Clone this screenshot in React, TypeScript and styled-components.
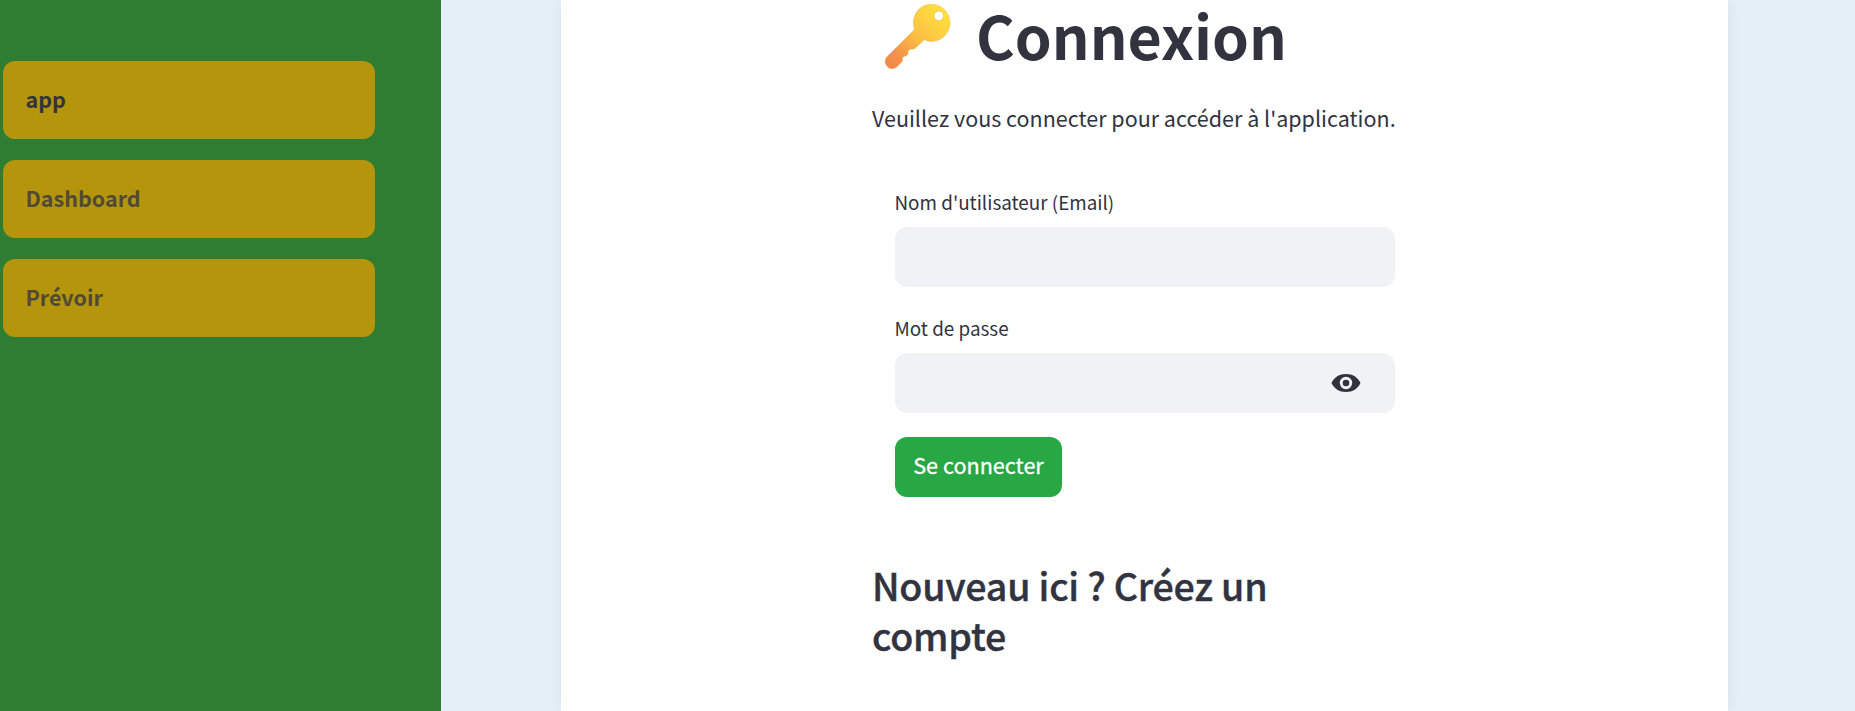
import React from 'react';
import styled, { createGlobalStyle } from 'styled-components';

const GlobalStyle = createGlobalStyle`
  * { box-sizing: border-box; }
  html, body { margin: 0; padding: 0; overflow: hidden; }
  body {
    font-family: "Source Sans Pro", "Noto Sans CJK SC", sans-serif;
    color: #31333f;
    background: #e4eff8;
  }
`;

const Page = styled.div`
  display: grid;
  grid-template-columns: 441px 1fr;
  height: 711px;
  overflow: hidden;
`;

const Sidebar = styled.nav`
  display: flex;
  flex-direction: column;
  gap: 21px;
  padding: 61px 66px 0 3px;
  background: #2e7d32;
`;

const NavLink = styled.a<{ $active?: boolean }>`
  display: flex;
  align-items: center;
  height: 78px;
  padding: 0 22.5px 2px;
  border-radius: 12px;
  background: #b5950b;
  color: ${(p) => (p.$active ? '#31333f' : '#504a35')};
  font-size: 21.5px;
  font-weight: 700;
  line-height: 36px;
`;

const Main = styled.main`
  padding: 0 127px 0 120px;
  overflow: hidden;
`;

const Card = styled.section`
  height: 711px;
  padding: 0 333px 0 311px;
  background: #fff;
  box-shadow: 0 0 15px rgba(0, 0, 0, 0.06);
`;

const Title = styled.h1`
  display: flex;
  align-items: flex-start;
  height: 78px;
  margin: 0;
  font-size: 59.1px;
  font-weight: 700;
  line-height: 68px;
  white-space: nowrap;
`;

const KeyIcon = styled.svg`
  flex: none;
  width: 80px;
  height: 78px;
  margin-right: 24px;
`;

const Intro = styled.p`
  height: 36px;
  margin: 22px 0 0;
  font-size: 21.5px;
  line-height: 36px;
  white-space: nowrap;
`;

const Form = styled.form`
  display: flex;
  flex-direction: column;
  align-items: flex-start;
  margin: 50px 0 0;
  padding-left: 23px;
`;

const Label = styled.label`
  height: 32px;
  margin-bottom: 9px;
  margin-left: -0.5px;
  font-size: 18.85px;
  line-height: 32px;
  white-space: nowrap;
`;

const Field = styled.div`
  display: flex;
  align-items: center;
  width: 500px;
  height: 60px;
  margin-bottom: 25px;
  padding-right: 34px;
  border-radius: 12px;
  background: #f0f2f6;
`;

const Input = styled.input`
  flex: 1;
  min-width: 0;
  height: 100%;
  padding: 0 18px;
  border: 0;
  outline: 0;
  background: transparent;
  font: inherit;
`;

const EyeIcon = styled.svg`
  width: 30px;
  height: 18px;
  fill: #31333f;
`;

const Submit = styled.button`
  width: 167px;
  height: 60px;
  margin-top: -1px;
  padding: 0 0 5px;
  border: 0;
  border-radius: 12px;
  background: #28a745;
  color: #fff;
  font-family: inherit;
  font-size: 21.6px;
  line-height: 36px;
  white-space: nowrap;
  -webkit-text-stroke: 0.3px #fff;
`;

const Subtitle = styled.h2`
  margin: 63px 0 0;
  font-size: 37.6px;
  font-weight: 500;
  line-height: 50px;
  letter-spacing: -0.22px;
  -webkit-text-stroke: 0.4px #31333f;
`;

export default function App() {
  return (
    <>
      <GlobalStyle />
      <Page>
        <Sidebar>
          <NavLink $active>app</NavLink>
          <NavLink>Dashboard</NavLink>
          <NavLink>Prévoir</NavLink>
        </Sidebar>
        <Main>
          <Card>
            <Title>
              <KeyIcon viewBox="0 0 80 78" aria-hidden="true">
                <defs>
                  <linearGradient id="gold" x1="73" y1="10" x2="18" y2="68" gradientUnits="userSpaceOnUse">
                    <stop offset="0" stopColor="#fee13c" />
                    <stop offset="0.3" stopColor="#fdcd42" />
                    <stop offset="0.5" stopColor="#fbbd43" />
                    <stop offset="0.8" stopColor="#f4944a" />
                    <stop offset="1" stopColor="#f4864b" />
                  </linearGradient>
                </defs>
                <path
                  fill="url(#gold)"
                  stroke="#eba53c"
                  strokeWidth="0.4"
                  fillRule="evenodd"
                  d="M59.500 4.200C49.300 4.200 41.400 12.400 41.400 22.500C41.400 25 41.900 27.400 42.600 29.500L15.200 56.600C12.500 59.300 12.600 63.600 15.200 66.500C17.900 69.400 22.300 69.500 25.200 66.600L30.200 61.600C31.200 60.500 29.700 58.800 30.800 57.500C32 56 35.300 56 35.900 54C36.300 52.500 35.500 51.200 37 50C38.500 48.600 41.800 49.700 43.200 48.300L52.300 39.700C54.600 40.800 57 41.400 59.500 41.400C69.700 41.400 78 33 78 22.800C78 12.500 69.700 4.200 59.500 4.200ZM66.800 11.200A4.700 4.700 0 1 1 66.800 20.600A4.700 4.700 0 1 1 66.800 11.200Z"
                />
              </KeyIcon>
              Connexion
            </Title>
            <Intro>Veuillez vous connecter pour accéder à l'application.</Intro>
            <Form>
              <Label htmlFor="email">Nom d'utilisateur (Email)</Label>
              <Field>
                <Input id="email" type="text" />
              </Field>
              <Label htmlFor="password">Mot de passe</Label>
              <Field>
                <Input id="password" type="password" />
                <EyeIcon viewBox="0 0 30 18" aria-hidden="true">
                  <path
                    fillRule="evenodd"
                    d="M0.500 9C3 3.300 8.500 0 15 0S27 3.300 29.500 9C27 14.700 21.500 18 15 18S3 14.700 0.500 9ZM15 2.800A6.200 6.200 0 1 0 15 15.200A6.200 6.200 0 1 0 15 2.800ZM15 5.700A3.300 3.300 0 1 1 15 12.300A3.300 3.300 0 1 1 15 5.700Z"
                  />
                </EyeIcon>
              </Field>
              <Submit type="button">Se connecter</Submit>
            </Form>
            <Subtitle>Nouveau ici ? Créez un compte</Subtitle>
          </Card>
        </Main>
      </Page>
    </>
  );
}
